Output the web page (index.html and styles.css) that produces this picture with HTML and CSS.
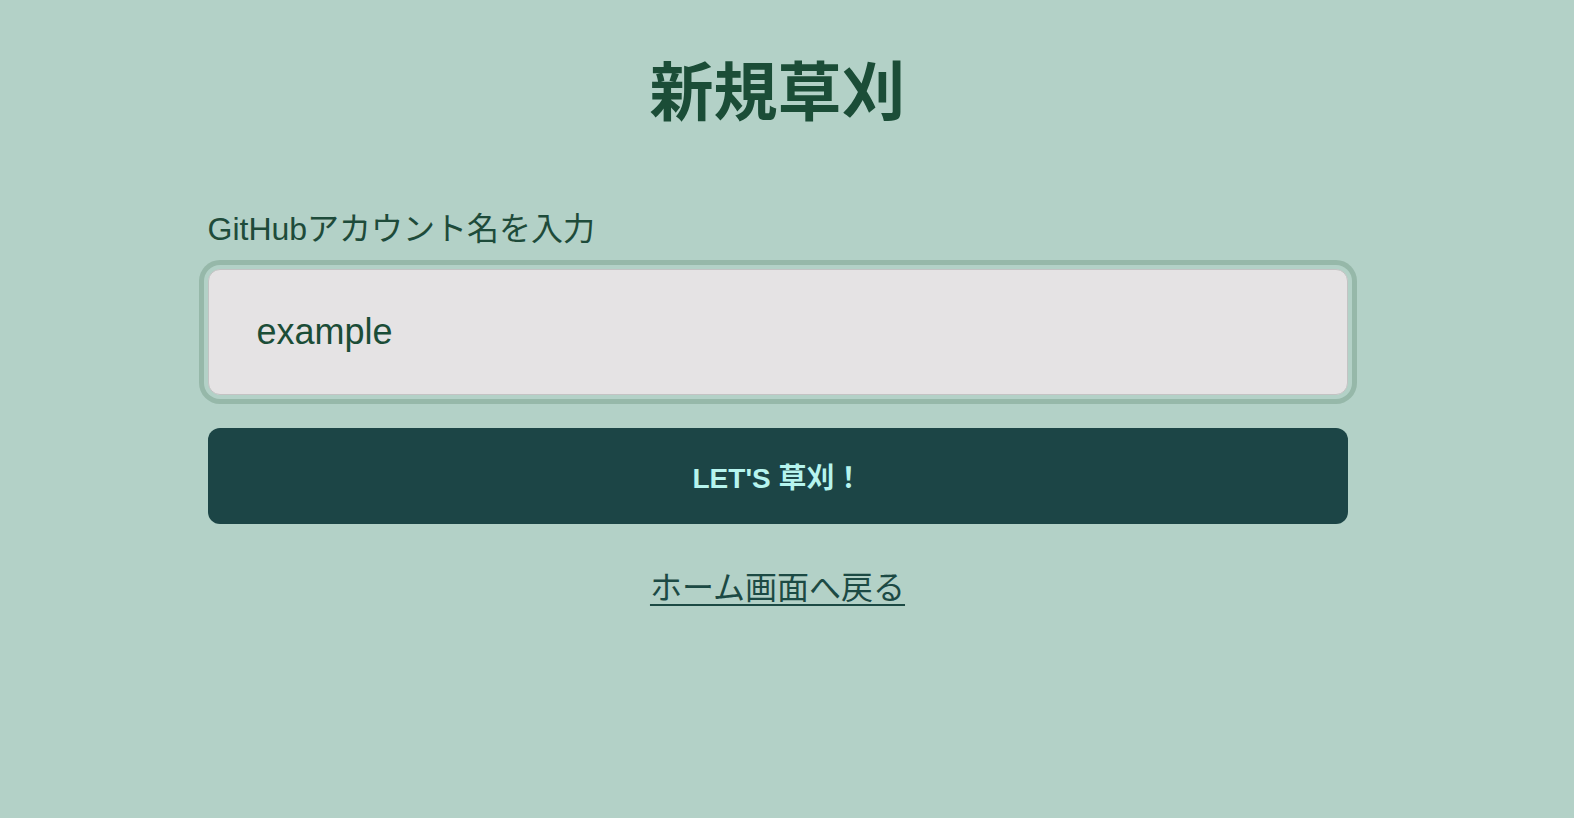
FILE: index.html
```html
<!DOCTYPE html>
<html lang="ja">
<head>
<meta charset="utf-8">
<title>新規草刈</title>
<link rel="stylesheet" href="styles.css">
</head>
<body>
<main class="page">
  <h1 class="title">新規草刈</h1>
  <form class="form">
    <label class="label" for="account">GitHubアカウント名を入力</label>
    <div class="field">
      <input class="input" id="account" type="text" value="example">
    </div>
    <button class="button" type="button">LET'S 草刈！</button>
  </form>
  <a class="back" href="#">ホーム画面へ戻る</a>
</main>
</body>
</html>
```
FILE: styles.css
```css
html, body {
  margin: 0;
  padding: 0;
  background: #b3d1c7;
}
body {
  font-family: "Liberation Sans", "Noto Sans CJK JP", sans-serif;
  color: #1b4d37;
}
.page {
  display: flex;
  flex-direction: column;
  align-items: center;
  padding: 61px 19px 0 0;
  min-height: 750px;
}
.title {
  margin: 0;
  font-size: 64px;
  line-height: 1;
  font-weight: 700;
  color: #1b4d37;
}
.form {
  width: 1140px;
  display: flex;
  flex-direction: column;
  margin-top: 84px;
}
.label {
  font-size: 32px;
  line-height: 40px;
  color: #1e4b3a;
}
.field {
  margin-top: 20px;
}
.input {
  box-sizing: border-box;
  display: block;
  width: 100%;
  height: 126px;
  margin: 0;
  padding: 0 48px;
  border: 1px solid #c3c3c3;
  border-radius: 12px;
  background: #e5e3e4;
  font-family: "Liberation Sans", "Noto Sans CJK JP", sans-serif;
  font-size: 36px;
  color: #1b4d37;
  outline: none;
  box-shadow: 0 0 0 4px #b3d1c7, 0 0 0 9px #96b8a9;
}
.button {
  margin-top: 33px;
  height: 96px;
  border: 0;
  border-radius: 12px;
  background: #1c4546;
  color: #b6f4ee;
  font-family: "Liberation Sans", "Noto Sans CJK JP", sans-serif;
  font-size: 28px;
  font-weight: 700;
  cursor: pointer;
}
.back {
  margin-top: 44px;
  font-size: 32px;
  line-height: 40px;
  color: #1c4a44;
  text-decoration: underline;
  text-underline-offset: 5px;
  text-decoration-thickness: 2px;
}
```
